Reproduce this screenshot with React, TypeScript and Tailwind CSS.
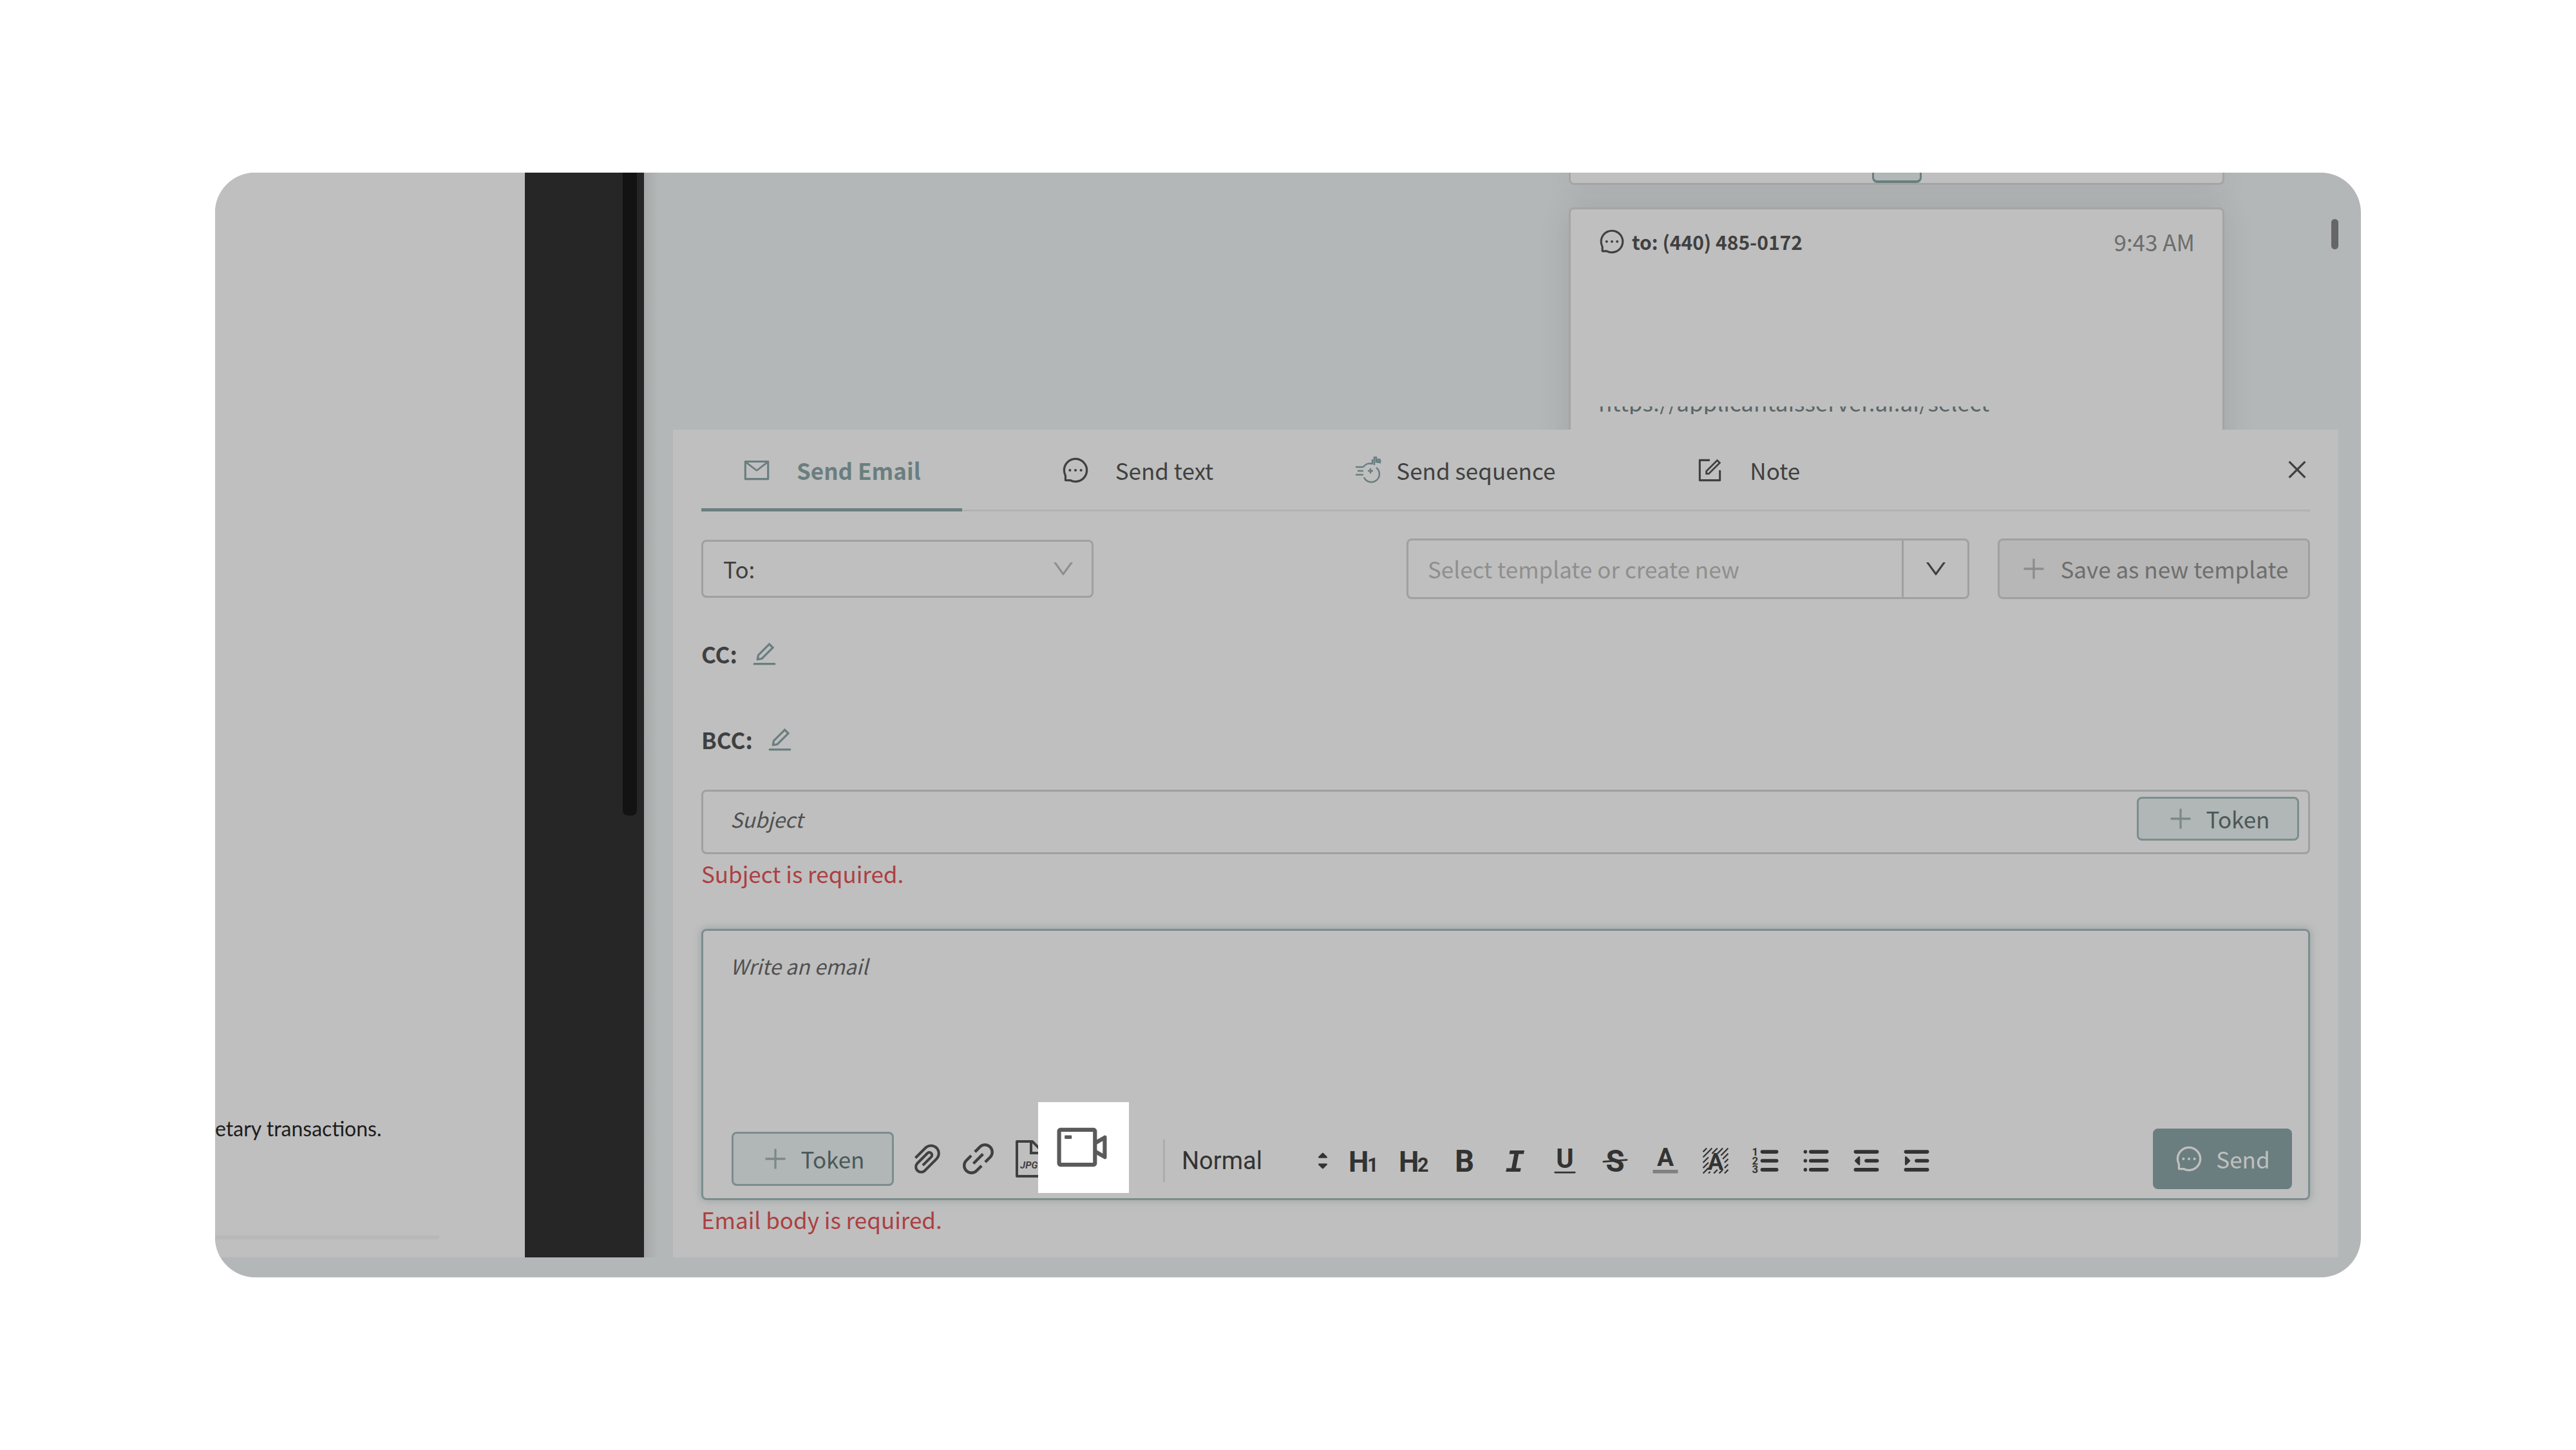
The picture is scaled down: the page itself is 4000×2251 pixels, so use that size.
import React, { useState } from 'react';
import clsx from 'clsx';
import {
    AiOutlineClose,
    AiOutlineDown,
    AiOutlineEdit,
    AiOutlineForm,
    AiOutlineLink,
    AiOutlineMail,
    AiOutlineMessage,
    AiOutlinePaperClip,
    AiOutlinePlus,
    AiOutlineVideoCamera
} from 'react-icons/ai';

interface Tab {
    id: string;
    label: string;
    icon: React.ReactNode;
    gap: string;
}

interface ToolButton {
    label: string;
    icon: React.ReactNode;
}

const SequenceIcon: React.FC = () => (
    <svg className="size-[44px] text-[#6a7e7f]" viewBox="0 0 44 44" fill="none" stroke="currentColor" strokeWidth="2.5">
        <path d="M15 17a12 12 0 0 1 13-5M35 18a12.500 12.500 0 1 1-19 15" />
        <path d="M3 17h12M6 23h9M3 29h12" />
        <path d="M26 19v8M22 23h8" />
        <path d="M32 14V2l3 0v7l6 1v-4M29 5v8" />
        <circle cx="39" cy="7" r="2" />
    </svg>
);

const JpgIcon: React.FC = () => (
    <svg className="h-[58px] w-[46px]" viewBox="0 0 46 58" fill="none" stroke="currentColor" strokeWidth="4">
        <path d="M4 2h24l14 14v40H4z" strokeLinejoin="round" />
        <path d="M26 3v17h15" />
        <text x="9" y="44" fontSize="15" fontWeight="700" fontStyle="italic" fontFamily="Roboto, sans-serif" fill="currentColor" stroke="none">
            JPG
        </text>
    </svg>
);

const EditorIcon: React.FC<{ children: React.ReactNode }> = ({ children }) => (
    <svg
        className="size-[50px] overflow-visible"
        viewBox="0 0 18 18"
        fill="none"
        stroke="currentColor"
        strokeWidth="2"
        strokeLinecap="round"
        strokeLinejoin="round"
    >
        {children}
    </svg>
);

const Letter: React.FC<{ x: number; y: number; size: number; className?: string; children: string }> = ({
    x,
    y,
    size,
    className,
    children
}) => (
    <text
        x={x}
        y={y}
        fontSize={size}
        textAnchor="middle"
        fill="currentColor"
        stroke="none"
        className={clsx("font-bold", className || "font-[Roboto,sans-serif]")}
    >
        {children}
    </text>
);

const TABS: Tab[] = [
    { id: 'email', label: 'Send Email', icon: <AiOutlineMail className="size-[44px]" />, gap: 'gap-[40px]' },
    { id: 'text', label: 'Send text', icon: <AiOutlineMessage className="size-[44px]" />, gap: 'gap-[40px]' },
    { id: 'sequence', label: 'Send sequence', icon: <SequenceIcon />, gap: 'gap-[22px]' },
    { id: 'note', label: 'Note', icon: <AiOutlineForm className="size-[44px]" />, gap: 'gap-[40px]' }
];

const TOOLS: ToolButton[] = [
    {
        label: 'Heading 1',
        icon: (
            <>
                <Letter x={6} y={15} size={16}>H</Letter>
                <Letter x={14} y={15} size={11}>1</Letter>
            </>
        )
    },
    {
        label: 'Heading 2',
        icon: (
            <>
                <Letter x={6} y={15} size={16}>H</Letter>
                <Letter x={14} y={15} size={11}>2</Letter>
            </>
        )
    },
    { label: 'Bold', icon: <Letter x={9} y={15} size={17}>B</Letter> },
    {
        label: 'Italic',
        icon: <Letter x={9} y={15} size={18} className="font-['Liberation_Mono',monospace] italic">I</Letter>
    },
    {
        label: 'Underline',
        icon: (
            <>
                <Letter x={9} y={13} size={15}>U</Letter>
                <path d="M3.500 15.500h11" strokeWidth="1" />
            </>
        )
    },
    {
        label: 'Strikethrough',
        icon: (
            <>
                <Letter x={9} y={15} size={17}>S</Letter>
                <path d="M2.500 9.500l13-1" strokeWidth="1" />
            </>
        )
    },
    {
        label: 'Text color',
        icon: (
            <>
                <Letter x={9} y={12} size={14}>A</Letter>
                <path d="M2 15h14" stroke="#808080" strokeLinecap="butt" />
            </>
        )
    },
    {
        label: 'Background color',
        icon: (
            <>
                <path
                    d="M2 4l2-2M2 7l5-5M2 10l3-3M7 5l3-3M2 13l3-3M10 5l3-3M2 16l3-3M12 6l4-4M13 8l3-3M14 10l2-2M5 16l1-1M8 16l2-2M11 16l2-2M14 16l2-2M14 13l2-2"
                    strokeWidth="0.8"
                    strokeLinecap="butt"
                />
                <Letter x={9} y={14} size={13}>A</Letter>
            </>
        )
    },
    {
        label: 'Ordered list',
        icon: (
            <>
                <path d="M7 4h8M7 9h8M7 14h8" />
                <Letter x={3} y={6} size={6}>1</Letter>
                <Letter x={3} y={11} size={6}>2</Letter>
                <Letter x={3} y={16} size={6}>3</Letter>
            </>
        )
    },
    { label: 'Bullet list', icon: <path d="M6 4h9M6 9h9M6 14h9M3 4h0M3 9h0M3 14h0" /> },
    {
        label: 'Outdent',
        icon: (
            <>
                <path d="M3 4h12M3 14h12M9 9h6" />
                <path d="M5 7v4L3 9z" fill="currentColor" strokeWidth="1" />
            </>
        )
    },
    {
        label: 'Indent',
        icon: (
            <>
                <path d="M3 4h12M3 14h12M9 9h6" />
                <path d="M3 7v4l2-2z" fill="currentColor" strokeWidth="1" />
            </>
        )
    }
];

const TokenButton: React.FC<{ className: string }> = ({ className }) => (
    <button
        type="button"
        className={clsx(
            "flex w-[252px] shrink-0 items-center justify-center gap-[18px] rounded-lg border-[3px] border-[#7c8d8d] bg-[#b1b6b6] text-[#4a5859]",
            className
        )}
    >
        <AiOutlinePlus className="size-[44px] text-[#7c8988]" />
        Token
    </button>
);

const DocumentPreview: React.FC = () => (
    <div className="flex shrink-0">
        <div className="flex w-[481px] flex-col justify-end overflow-hidden bg-[#bfbfbf] pb-[28px]">
            <p className="font-[Lato,sans-serif] text-[32px] leading-[44px] whitespace-nowrap text-[#1c1c1c]">
                etary transactions.
            </p>
            <hr className="mt-[144px] mr-[133px] border-t-[6px] border-[#b6b8b9]" />
        </div>
        <div className="flex w-[185px] justify-end bg-[#262626] pr-[11px]">
            <div className="h-[998px] w-[22px] rounded-b-lg bg-[#131313]" />
        </div>
        <div className="w-[45px] bg-linear-to-r from-[#a7a8a8] via-[#b3b7b7] via-50% to-[#b3b7b7]" />
    </div>
);

const Messages: React.FC = () => (
    <div className="flex h-[399px] justify-end overflow-hidden pr-[35px]">
        <div className="flex w-[1018px] flex-col gap-[35px]">
            <div className="flex h-[19px] shrink-0 justify-center rounded-b-lg border-x-[3px] border-b-[3px] border-[#a5a5a5] bg-[#bfbfbf] shadow-[0_4px_50px_rgba(0,0,0,0.10)]">
                <div className="w-[77px] rounded-b-lg border-x-[3px] border-b-4 border-[#6a7e7f] bg-[#b1b6b6]" />
            </div>
            <div className="flex h-[500px] shrink-0 flex-col rounded-lg border-[3px] border-[#a5a5a5] bg-[#bfbfbf] px-[43px] pt-[28px] shadow-[0_4px_50px_rgba(0,0,0,0.10)]">
                <div className="flex items-center">
                    <AiOutlineMessage className="size-[42px] text-[#404040]" />
                    <span className="ml-[10px] text-[30px] leading-[44px] font-bold text-[#404040]">
                        to: (440) 485-0172
                    </span>
                    <time className="ml-auto leading-[44px] text-[#6c6c6c]">9:43 AM</time>
                </div>
                <div className="mt-[234px] flex h-[12px] items-end overflow-hidden">
                    <a href="#" className="leading-[38px] whitespace-nowrap text-[#5a6667]">
                        https://applicantaisserver.ai.ai/select
                    </a>
                </div>
            </div>
        </div>
        <div className="flex w-[177px] justify-end pt-[72px]">
            <div className="h-[47px] w-[11px] rounded-full bg-[#666666]" />
        </div>
    </div>
);

const Composer: React.FC = () => {
    const [activeTab, setActiveTab] = useState('email');
    const [subject, setSubject] = useState('');
    const [body, setBody] = useState('');

    return (
        <section className="mr-[35px] flex flex-1 flex-col bg-[#bfbfbf] px-[44px] pb-[37px]">
            {/* Tabs */}
            <div className="flex h-[127px] justify-between border-b-[3px] border-[#b2b2b2]">
                <div className="flex gap-[90px]">
                    {TABS.map((tab) => (
                        <button
                            key={tab.id}
                            type="button"
                            onClick={() => setActiveTab(tab.id)}
                            className={clsx(
                                "-mb-[3px] flex items-center border-b-[5px] px-[64px] pt-1",
                                tab.gap,
                                activeTab === tab.id
                                    ? "border-[#6a7e7f] font-bold text-[#6a7e7f]"
                                    : "border-transparent"
                            )}
                        >
                            {tab.icon}
                            {tab.label}
                        </button>
                    ))}
                </div>
                <button type="button" aria-label="Close">
                    <AiOutlineClose className="size-[40px]" />
                </button>
            </div>

            {/* Recipient and template */}
            <div className="mt-[42px] flex items-center">
                <div className="relative w-[609px]">
                    <select
                        aria-label="To"
                        className="h-[90px] w-full appearance-none rounded-lg border-[3px] border-[#a0a0a0] px-[31px]"
                    >
                        <option>To:</option>
                    </select>
                    <AiOutlineDown className="pointer-events-none absolute top-[25px] right-[27px] size-[40px] text-[#8f8f8f]" />
                </div>
                <div className="ml-auto flex h-[94px] w-[874px] rounded-lg border-[3px] border-[#a0a0a0]">
                    <input
                        aria-label="Template"
                        placeholder="Select template or create new"
                        className="min-w-0 flex-1 pl-[30px] outline-none placeholder:text-[#8f8f8f]"
                    />
                    <button
                        type="button"
                        aria-label="Show templates"
                        className="flex w-[102px] items-center justify-center border-l-[3px] border-[#a0a0a0]"
                    >
                        <AiOutlineDown className="size-[40px]" />
                    </button>
                </div>
                <button
                    type="button"
                    className="ml-[44px] flex h-[94px] w-[485px] items-center justify-center gap-[20px] rounded-lg border-[3px] border-[#a0a0a0] bg-[#b7b7b7] text-[#6e6e6e]"
                >
                    <AiOutlinePlus className="size-[44px] text-[#8c8c8c]" />
                    Save as new template
                </button>
            </div>

            <div className="mt-[63px] flex items-center gap-[20px]">
                <span className="font-bold">CC:</span>
                <button type="button" aria-label="Edit CC" className="text-[#6a7e7f]">
                    <AiOutlineEdit className="size-[44px]" />
                </button>
            </div>
            <div className="mt-[89px] flex items-center gap-[20px]">
                <span className="font-bold">BCC:</span>
                <button type="button" aria-label="Edit BCC" className="text-[#6a7e7f]">
                    <AiOutlineEdit className="size-[44px]" />
                </button>
            </div>

            {/* Subject */}
            <div className="mt-[56px] flex h-[100px] items-start rounded-lg border-[3px] border-[#a0a0a0] pr-[14px]">
                <input
                    aria-label="Subject"
                    placeholder="Subject"
                    value={subject}
                    onChange={(e) => setSubject(e.target.value)}
                    className="h-[84px] flex-1 pl-[42px] text-[32px] outline-none placeholder:text-[#505050] placeholder:italic"
                />
                <TokenButton className="mt-[8px] h-[68px]" />
            </div>
            {subject === '' && <p className="mt-[8px] text-[#ab4042]">Subject is required.</p>}

            {/* Body editor */}
            <div className="mt-[64px] flex min-h-[421px] flex-col rounded-lg border-[3px] border-[#7c8d8d] pb-[14px] shadow-[0_0_12px_2px_rgba(106,126,127,0.35)]">
                <textarea
                    aria-label="Email body"
                    placeholder="Write an email"
                    value={body}
                    onChange={(e) => setBody(e.target.value)}
                    className="flex-1 resize-none px-[42px] pt-[32px] text-[32px] leading-[44px] outline-none placeholder:text-[#505050] placeholder:italic"
                />
                <div className="flex items-center pr-[25px] pl-[44px]">
                    <TokenButton className="mr-3 h-[84px]" />
                    <button type="button" aria-label="Attach file" className="flex w-[79px] justify-center">
                        <AiOutlinePaperClip className="size-[60px]" />
                    </button>
                    <button type="button" aria-label="Insert link" className="flex w-[79px] justify-center">
                        <AiOutlineLink className="size-[64px]" />
                    </button>
                    <button type="button" aria-label="Insert image" className="flex w-[79px] justify-center">
                        <JpgIcon />
                    </button>
                    <div className="relative h-[79px] w-[79px]">
                        <button
                            type="button"
                            aria-label="Record video"
                            className="absolute -top-[49px] -left-[25px] flex size-[141px] items-center justify-center bg-white pr-[6px] text-[#5a5a5a]"
                        >
                            <AiOutlineVideoCamera className="size-[88px]" />
                        </button>
                    </div>
                    <div className="ml-[90px] flex items-center pt-[6px] text-[#333333]">
                        <div className="relative flex h-[66px] w-[273px] items-center border-l-[3px] border-[#acacac]">
                            <select
                                aria-label="Text style"
                                className="h-full w-full appearance-none pl-[26px] font-[Roboto,sans-serif] text-[38px]"
                            >
                                <option>Normal</option>
                            </select>
                            <svg className="pointer-events-none absolute right-0 size-[50px]" viewBox="0 0 18 18" fill="currentColor" stroke="currentColor" strokeLinejoin="round">
                                <path d="M7 11l2 2 2-2zM7 7l2-2 2 2z" />
                            </svg>
                        </div>
                        {TOOLS.map((tool) => (
                            <button
                                key={tool.label}
                                type="button"
                                aria-label={tool.label}
                                className="flex w-[78px] justify-center"
                            >
                                <EditorIcon>{tool.icon}</EditorIcon>
                            </button>
                        ))}
                    </div>
                    <button
                        type="button"
                        className="ml-auto flex h-[94px] w-[216px] items-center justify-center gap-[20px] rounded-lg bg-[#6a7e7f] text-[#c0c0bf]"
                    >
                        <AiOutlineMessage className="size-[44px]" />
                        Send
                    </button>
                </div>
            </div>
            {body === '' && <p className="mt-[8px] text-[#ab4042]">Email body is required.</p>}
        </section>
    );
};

const App: React.FC = () => {
    return (
        <div className="min-h-screen bg-white px-[334px] py-[268px] font-['Noto_Sans_CJK_SC',sans-serif] text-[35px] leading-[44px] text-[#404040]">
            <main className="flex overflow-hidden rounded-[62px] bg-[#b3b7b7] pb-[31px]">
                <DocumentPreview />
                <div className="flex min-w-0 flex-1 flex-col">
                    <Messages />
                    <Composer />
                </div>
            </main>
        </div>
    );
};

export default App;
